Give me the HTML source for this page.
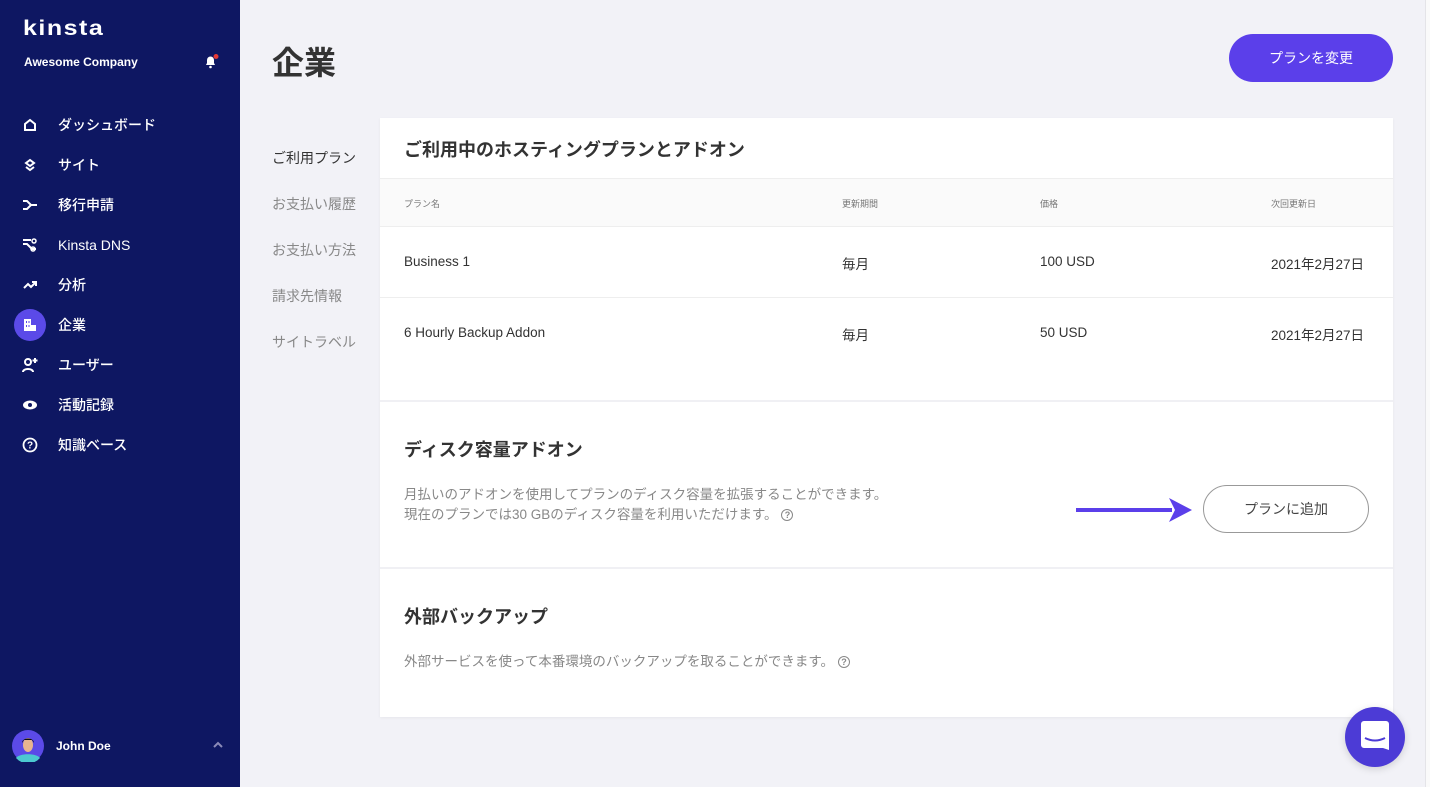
<!DOCTYPE html>
<html><head><meta charset="utf-8"><style>
*{box-sizing:border-box;margin:0;padding:0}
body{width:1430px;height:787px;overflow:hidden;background:#f2f2f7;font-family:"Liberation Sans","Noto Sans CJK JP",sans-serif;position:relative}
.sb{position:absolute;left:0;top:0;width:240px;height:787px;background:#0e1762;color:#fff}
.logo{position:absolute;left:23px;top:14px;font-size:25px;font-weight:bold;letter-spacing:1.5px;transform:scaleY(0.85)}
.co{position:absolute;left:24px;top:55px;font-size:12px;font-weight:bold}
.bell{position:absolute;left:203px;top:54px}
.nav div{position:absolute;left:58px;font-size:14px;font-weight:500;height:20px;line-height:20px}
.ic{position:absolute;left:22px;width:16px;height:16px}
.act{position:absolute;left:14px;top:309px;width:32px;height:32px;border-radius:50%;background:#5b4ae8}
h1{position:absolute;left:272px;top:38px;font-size:32px;font-weight:bold;color:#333}
.btn{position:absolute;left:1229px;top:34px;width:164px;height:48px;border-radius:24px;background:#5b3fea;color:#fff;font-size:14px;text-align:center;line-height:48px}
.sub div{position:absolute;left:272px;font-size:14px;color:#888}
.card{position:absolute;left:380px;top:118px;width:1013px;height:599px;background:#fff;box-shadow:0 1px 3px rgba(0,0,0,.05)}
.t{position:absolute;font-size:13.5px;color:#333}
.th{position:absolute;font-size:9px;color:#777}
.h2{position:absolute;left:24px;font-size:18px;font-weight:bold;color:#333}
.p{position:absolute;left:24px;font-size:13.5px;color:#888;line-height:20px}
.q{display:inline-block;width:12px;height:12px;border:1.3px solid #888;border-radius:50%;font-size:9px;text-align:center;line-height:10px;vertical-align:middle;margin-left:4px;font-weight:bold}
</style></head><body>
<div class="sb">
<div class="logo">kinsta</div>
<div class="co">Awesome Company</div>
<svg class="bell" width="16" height="16" viewBox="0 0 16 16"><path d="M3 11h9l-1-2V6a3.5 3.5 0 0 0-7 0v3z" fill="#fff"/><circle cx="7.5" cy="13" r="1.3" fill="#fff"/><circle cx="13" cy="2.5" r="2.5" fill="#e53935"/></svg>
<div class="act"></div>
<div class="nav">
<div style="top:115px">ダッシュボード</div>
<div style="top:155px">サイト</div>
<div style="top:195px">移行申請</div>
<div style="top:235px">Kinsta DNS</div>
<div style="top:275px">分析</div>
<div style="top:315px">企業</div>
<div style="top:355px">ユーザー</div>
<div style="top:395px">活動記録</div>
<div style="top:435px">知識ベース</div>
</div>
<svg class="ic" style="top:117px" viewBox="0 0 16 16"><path d="M3 13V7l5-4 5 4v6z" fill="none" stroke="#fff" stroke-width="2"/></svg>
<svg class="ic" style="top:157px" viewBox="0 0 16 16"><path d="M4 6l4-3 4 3-4 3zM4 10l4 3 4-3" fill="none" stroke="#fff" stroke-width="2"/></svg>
<svg class="ic" style="top:197px" viewBox="0 0 16 16"><path d="M1 4h4l4 4H15M1 12h4l4-4" fill="none" stroke="#fff" stroke-width="2"/></svg>
<svg class="ic" style="top:237px" viewBox="0 0 16 16"><path d="M1 3h8M1 7h4l5 5h4" fill="none" stroke="#fff" stroke-width="2"/><circle cx="12" cy="4" r="2" fill="none" stroke="#fff" stroke-width="1.5"/><circle cx="11" cy="12" r="2" fill="none" stroke="#fff" stroke-width="1.5"/></svg>
<svg class="ic" style="top:277px" viewBox="0 0 16 16"><path d="M2 11l4-4 3 3 5-5M10 5h4v4" fill="none" stroke="#fff" stroke-width="2"/></svg>
<svg class="ic" style="top:317px" viewBox="0 0 16 16"><path d="M2 2h7v12H2zM9 8h5v6H9z" fill="#fff"/><path d="M4 4h1v2H4zM6.5 4h1v2h-1zM4 8h1v2H4zM6.5 8h1v2h-1z" fill="#5b4ae8"/></svg>
<svg class="ic" style="top:357px" viewBox="0 0 16 16"><circle cx="6" cy="5" r="3" fill="none" stroke="#fff" stroke-width="2"/><path d="M1 15c0-4 10-4 10 0M13 1v5M10.5 3.5h5" fill="none" stroke="#fff" stroke-width="2"/></svg>
<svg class="ic" style="top:397px" viewBox="0 0 16 16"><ellipse cx="8" cy="8" rx="7" ry="4.5" fill="#fff"/><circle cx="8" cy="8" r="2" fill="#0e1762"/></svg>
<svg class="ic" style="top:437px" viewBox="0 0 16 16"><circle cx="8" cy="8" r="6.5" fill="none" stroke="#fff" stroke-width="1.8"/><text x="8" y="11.5" font-size="10" font-weight="bold" fill="#fff" text-anchor="middle" font-family="Liberation Sans">?</text></svg>
<svg style="position:absolute;left:12px;top:730px" width="32" height="32" viewBox="0 0 32 32"><circle cx="16" cy="16" r="16" fill="#5b4ae8"/><path d="M4 28c3-5 21-5 24 0a16 16 0 0 1-24 0z" fill="#4cc9d0"/><ellipse cx="16" cy="15" rx="5" ry="7" fill="#e8b48f"/><path d="M10 13c0-6 12-6 12 0l-2-3h-8z" fill="#111"/></svg>
<div style="position:absolute;left:56px;top:739px;font-size:12px;font-weight:bold">John Doe</div>
<svg style="position:absolute;left:212px;top:741px" width="12" height="8" viewBox="0 0 12 8"><path d="M2 6l4-4 4 4" fill="none" stroke="#8a8ab8" stroke-width="2"/></svg>
</div>
<h1>企業</h1>
<div class="btn">プランを変更</div>
<div class="sub">
<div style="top:148px;color:#333">ご利用プラン</div>
<div style="top:194px">お支払い履歴</div>
<div style="top:240px">お支払い方法</div>
<div style="top:286px">請求先情報</div>
<div style="top:332px">サイトラベル</div>
</div>
<div class="card">
<div class="h2" style="top:18px">ご利用中のホスティングプランとアドオン</div>
<div style="position:absolute;left:0;top:60px;width:1013px;height:49px;background:#fafafa;border-top:1px solid #eee;border-bottom:1px solid #eee"></div>
<div class="th" style="left:24px;top:79px">プラン名</div>
<div class="th" style="left:462px;top:79px">更新期間</div>
<div class="th" style="left:660px;top:79px">価格</div>
<div class="th" style="left:891px;top:79px">次回更新日</div>
<div class="t" style="left:24px;top:136px">Business 1</div>
<div class="t" style="left:462px;top:135px">毎月</div>
<div class="t" style="left:660px;top:136px">100 USD</div>
<div class="t" style="left:891px;top:135px">2021年2月27日</div>
<div style="position:absolute;left:0;top:179px;width:1013px;height:1px;background:#eee"></div>
<div class="t" style="left:24px;top:207px">6 Hourly Backup Addon</div>
<div class="t" style="left:462px;top:206px">毎月</div>
<div class="t" style="left:660px;top:207px">50 USD</div>
<div class="t" style="left:891px;top:206px">2021年2月27日</div>
<div style="position:absolute;left:0;top:282px;width:1013px;height:2px;background:#f0f0f4"></div>
<div class="h2" style="top:318px">ディスク容量アドオン</div>
<div class="p" style="top:367px">月払いのアドオンを使用してプランのディスク容量を拡張することができます。<br>現在のプランでは30 GBのディスク容量を利用いただけます。<span class="q">?</span></div>
<svg style="position:absolute;left:696px;top:380px" width="116" height="24" viewBox="0 0 116 24"><path d="M0 10h96v4H0z" fill="#5b3fea"/><path d="M93 0l23 12-23 12 6-12z" fill="#5b3fea"/></svg>
<div style="position:absolute;left:823px;top:367px;width:166px;height:48px;border:1px solid #999;border-radius:24px;text-align:center;line-height:46px;font-size:14px;color:#444">プランに追加</div>
<div style="position:absolute;left:0;top:449px;width:1013px;height:2px;background:#f0f0f4"></div>
<div class="h2" style="top:485px">外部バックアップ</div>
<div class="p" style="top:534px">外部サービスを使って本番環境のバックアップを取ることができます。<span class="q">?</span></div>
</div>
<div style="position:absolute;left:1425px;top:0;width:5px;height:787px;background:#fafafa;border-left:1px solid #e4e4e8"></div>
<div style="position:absolute;left:1345px;top:707px;width:60px;height:60px;border-radius:50%;background:#4c3bd6;box-shadow:0 2px 8px rgba(0,0,0,.15)"></div>
<svg style="position:absolute;left:1361px;top:721px" width="28" height="32" viewBox="0 0 28 32"><path d="M3 0h22a3 3 0 0 1 3 3v26l-6-2H3a3 3 0 0 1-3-3V3a3 3 0 0 1 3-3z" fill="#fff"/><path d="M4 17q10 5 20 0" fill="none" stroke="#4c3bd6" stroke-width="2"/></svg>
</body></html>
